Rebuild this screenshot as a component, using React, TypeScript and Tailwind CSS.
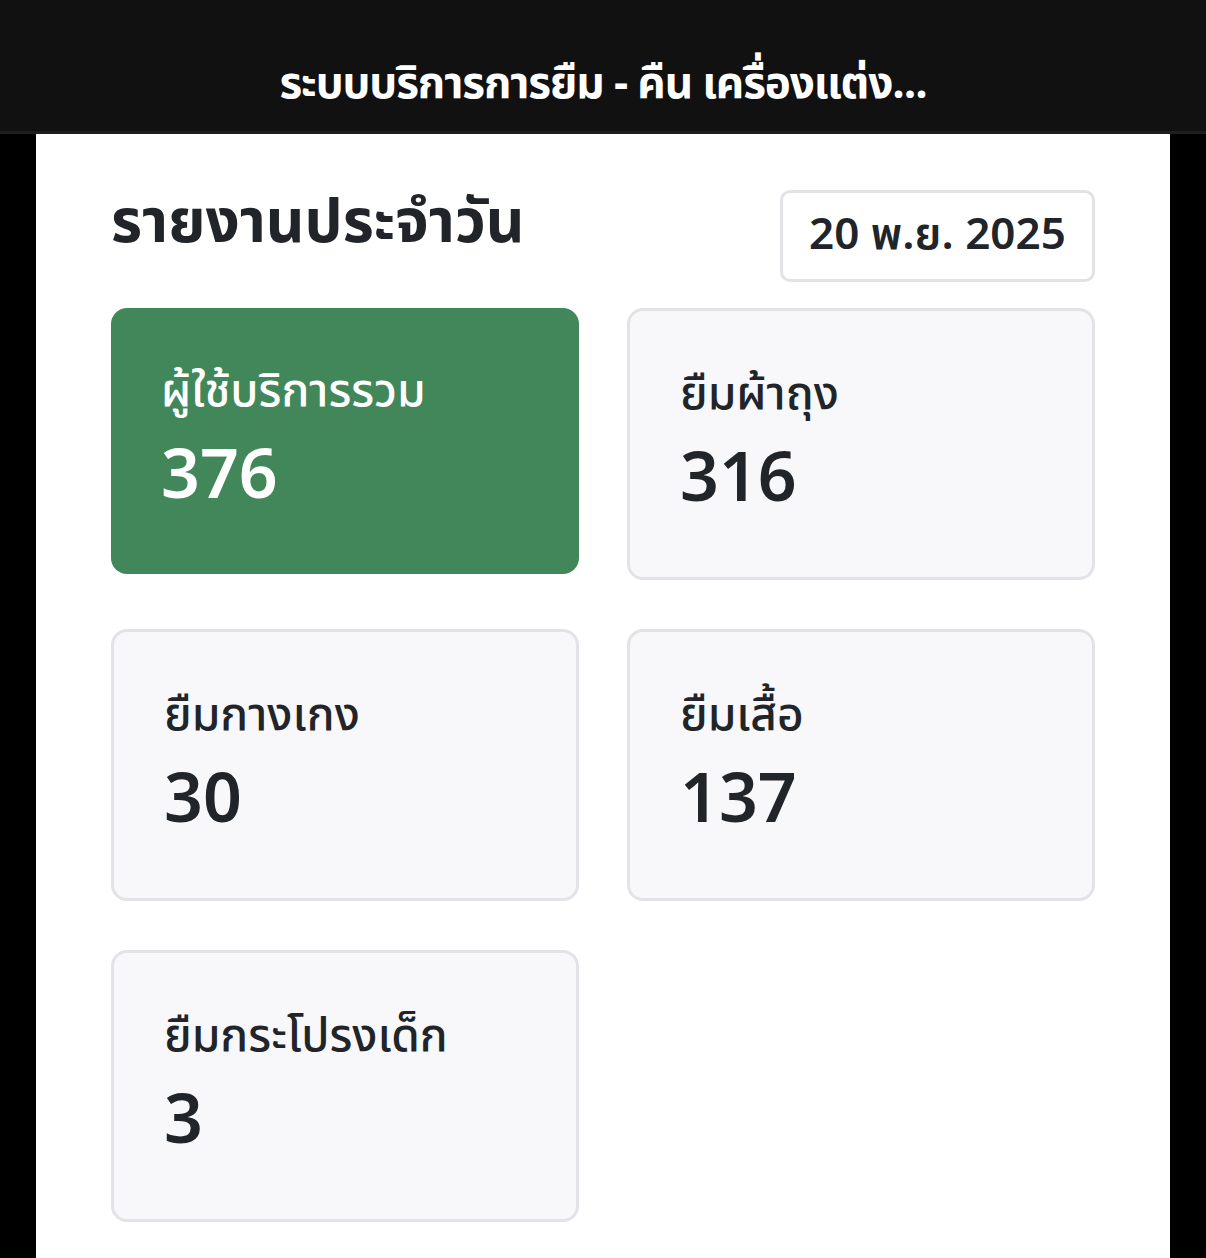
import React from "react";

const font = { fontFamily: '"Noto Sans Thai", "Noto Sans", "Liberation Sans", sans-serif' };

type Stat = { label: string; value: number; primary?: boolean };

const stats: Stat[] = [
  { label: "ผู้ใช้บริการรวม", value: 376, primary: true },
  { label: "ยืมผ้าถุง", value: 316 },
  { label: "ยืมกางเกง", value: 30 },
  { label: "ยืมเสื้อ", value: 137 },
  { label: "ยืมกระโปรงเด็ก", value: 3 },
];

function Card({ s }: { s: Stat }) {
  if (s.primary) {
    return (
      <div className="h-[266px] rounded-[16px] bg-[#428759] px-[50px] flex flex-col justify-center text-white">
        <div className="text-[46px] leading-[56px] font-medium">{s.label}</div>
        <div className="text-[68px] leading-[80px] font-semibold mt-[18px]">{s.value}</div>
      </div>
    );
  }
  return (
    <div className="h-[272px] rounded-[16px] border-[3px] border-[#e2e3e6] bg-[#f8f8fa] px-[50px] flex flex-col justify-center text-[#212529]">
      <div className="text-[46px] leading-[56px] font-medium">{s.label}</div>
      <div className="text-[68px] leading-[80px] font-semibold mt-[18px]">{s.value}</div>
    </div>
  );
}

export default function App() {
  return (
    <div className="min-h-[1258px] bg-black" style={font}>
      <header className="h-[134px] bg-[#111111] border-b-[3px] border-[#1e1e1e] flex items-center justify-center pt-[38px]">
        <h1 className="text-white text-[44px] font-bold tracking-tight whitespace-nowrap">
          ระบบบริการการยืม - คืน เครื่องแต่ง...
        </h1>
      </header>
      <main className="mx-[36px] bg-white px-[75px] pt-[56px] pb-[40px] min-h-[1124px]">
        <div className="flex items-start justify-between">
          <h2 className="text-[60px] leading-[70px] font-bold text-[#212529] mt-[-1px]">รายงานประจำวัน</h2>
          <div className="w-[315px] h-[92px] rounded-[10px] border-[3px] border-[#e2e3e6] flex items-center justify-center text-[44px] font-semibold text-[#212529]">
            20 พ.ย. 2025
          </div>
        </div>
        <div className="grid grid-cols-2 gap-x-[48px] gap-y-[49px] mt-[26px] items-start">
          {stats.map((s) => (
            <Card key={s.label} s={s} />
          ))}
        </div>
      </main>
    </div>
  );
}
